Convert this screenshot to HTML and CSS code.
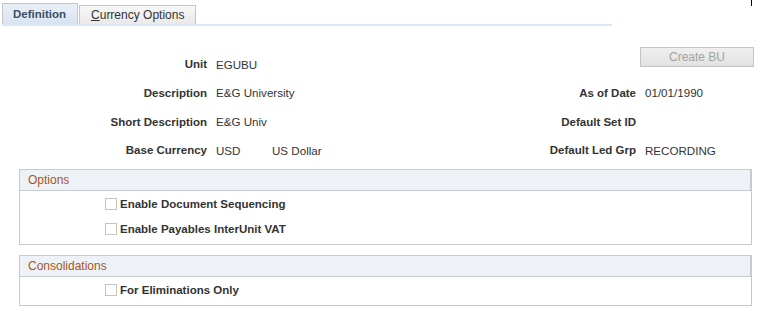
FILE: index.html
```html
<!DOCTYPE html>
<html>
<head>
<meta charset="utf-8">
<link rel="stylesheet" href="styles.css">
</head>
<body>
<div class="page">
  <div class="tabbar">
    <div class="tab active">Definition</div>
    <div class="tab"><u>C</u>urrency Options</div>
  </div>
  <div class="tabline"></div>
  <span class="corner"></span>

  <div class="form">
    <div class="lbl">Unit</div>
    <div class="val">EGUBU</div>
    <div class="lbl"></div>
    <div class="val btncell"><button class="btn" disabled>Create BU</button></div>

    <div class="lbl">Description</div>
    <div class="val">E&amp;G University</div>
    <div class="lbl">As of Date</div>
    <div class="val">01/01/1990</div>

    <div class="lbl">Short Description</div>
    <div class="val">E&amp;G Univ</div>
    <div class="lbl">Default Set ID</div>
    <div class="val"></div>

    <div class="lbl">Base Currency</div>
    <div class="val"><span class="code">USD</span>US Dollar</div>
    <div class="lbl">Default Led Grp</div>
    <div class="val">RECORDING</div>
  </div>

  <div class="group">
    <div class="ghead">Options</div>
    <div class="gbody">
      <label class="chk"><span class="box"></span>Enable Document Sequencing</label>
      <label class="chk"><span class="box"></span>Enable Payables InterUnit VAT</label>
    </div>
  </div>

  <div class="group">
    <div class="ghead">Consolidations</div>
    <div class="gbody">
      <label class="chk"><span class="box"></span>For Eliminations Only</label>
    </div>
  </div>
</div>
</body>
</html>
```

FILE: styles.css
```css
* { box-sizing: border-box; }
html, body { margin: 0; padding: 0; background: #fff; }
body {
  font-family: "Liberation Sans", Arial, sans-serif;
  color: #333;
  width: 760px;
  height: 313px;
  overflow: hidden;
}
.page { position: relative; }

.tabbar {
  display: flex;
  align-items: flex-end;
  gap: 1px;
  padding: 3px 0 0 2px;
  height: 24px;
}
.tab {
  height: 19px;
  padding: 0 11px;
  border: 1px solid #c6c6c6;
  border-bottom: none;
  background: linear-gradient(#f8f8f8, #e9e9e9);
  font-size: 12px;
  line-height: 18px;
  color: #333;
}
.tab u { text-decoration: underline; }
.tab.active {
  height: 21px;
  padding: 0 11px 0 10px;
  background: linear-gradient(#e9eff7, #d9e4f1);
  font-weight: bold;
  color: #3b4d66;
  line-height: 21px;
  font-size: 11.5px;
}
.tabline {
  margin-left: 2px;
  width: 610px;
  height: 2px;
  background: #dbe6f4;
}
.corner {
  position: absolute;
  left: 751px;
  top: 0;
  width: 1px;
  height: 6px;
  background: #000;
}

.form {
  display: grid;
  grid-template-columns: 207px 301px 128px 1fr;
  grid-auto-rows: 28.67px;
  align-items: center;
  margin-top: 24px;
  font-size: 11.6px;
}
.lbl {
  text-align: right;
  font-weight: bold;
  white-space: nowrap;
  font-size: 11.5px;
}
.val { padding-left: 9px; white-space: nowrap; }
.form .val:nth-child(4n) { padding-left: 9px; }
.code { display: inline-block; width: 56px; }
.btncell { align-self: start; }
.btn {
  display: block;
  margin: -3px 0 0 -5px;
  width: 114px;
  height: 20px;
  border: 1px solid #c4c4c4;
  background: linear-gradient(#efefef, #e2e2e2);
  color: #a3a3a3;
  font-family: "Liberation Sans", Arial, sans-serif;
  font-size: 12px;
  padding: 0;
}

.group {
  margin: 4px 0 0 19px;
  width: 733px;
  border: 1px solid #c9c9c9;
  border-top: 1px solid #c6cbd2;
}
.group + .group { margin-top: 10px; }
.ghead {
  height: 21px;
  background: #eef2f6;
  border-bottom: 1px solid #c6cbd2;
  border-right: 1px solid #c6cbd2;
  padding-left: 8px;
  color: #a6561e;
  font-size: 12px;
  line-height: 20px;
}
.gbody {
  display: flex;
  flex-direction: column;
  padding: 1px 0 2px 85px;
}
.chk {
  display: flex;
  align-items: center;
  height: 25px;
  font-weight: bold;
  font-size: 11.5px;
  color: #333;
}
.box {
  width: 12px;
  height: 12px;
  border: 1px solid #c3c3c3;
  background: #fff;
  margin-right: 3px;
}
```
